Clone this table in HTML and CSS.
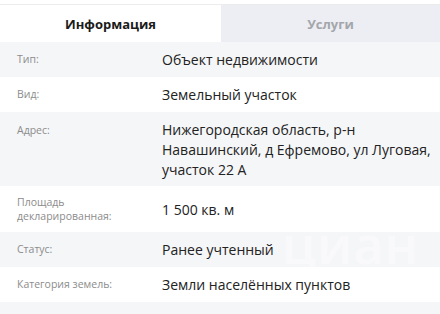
FILE: index.html
```html
<!DOCTYPE html>
<html lang="ru">
<head>
<meta charset="utf-8">
<title>Информация</title>
<link rel="stylesheet" href="styles.css">
</head>
<body>
<div class="card">
  <div class="tabs">
    <div class="tab tab-active">Информация</div>
    <div class="tab tab-inactive">Услуги</div>
  </div>
  <div class="rows">
    <div class="row row-grey"><div class="label">Тип:</div><div class="value">Объект недвижимости</div></div>
    <div class="row"><div class="label">Вид:</div><div class="value">Земельный участок</div></div>
    <div class="row row-grey row-top"><div class="label">Адрес:</div><div class="value">Нижегородская область, р-н Навашинский, д Ефремово, ул Луговая, участок 22 А</div></div>
    <div class="row row-tall"><div class="label label-multi">Площадь декларированная:</div><div class="value">1 500 кв. м</div></div>
    <div class="row row-grey"><div class="label">Статус:</div><div class="value">Ранее учтенный</div></div>
    <div class="row"><div class="label">Категория земель:</div><div class="value">Земли населённых пунктов</div></div>
    <div class="row row-grey"></div>
    <div class="watermark" aria-hidden="true">циан</div>
  </div>
</div>
</body>
</html>
```

FILE: styles.css
```css
* { box-sizing: border-box; }
html, body { margin: 0; padding: 0; background: #fff; }
body { font-family: "Open Sans", "Noto Sans", sans-serif; width: 440px; height: 314px; overflow: hidden; }
.card { padding-top: 4px; }
.tabs { display: grid; grid-template-columns: 221px 1fr; border-top: 1px solid #ececec; height: 38px; }
.tab { display: flex; align-items: center; justify-content: center; font-weight: 700; font-size: 13px; }
.tab-active { background: #fff; color: #1b1b1b; }
.tab-inactive { background: #eceef3; color: #a3a6ab; }
.rows { position: relative; }
.row { display: grid; grid-template-columns: 145px 1fr; align-items: center; padding: 7px 2px 7px 17px; min-height: 35px; background: #fff; }
.row-grey { background: #f5f6f8; }
.row-top { align-items: start; padding-top: 8px; padding-bottom: 6px; }
.row-top .value { line-height: 20px; }
.row-top .label { line-height: 20px; }
.row-tall { padding-top: 9px; padding-bottom: 9px; }
.label { font-size: 10.5px; color: #8c8c8c; line-height: 21px; max-width: 112px; }
.label-multi { line-height: 14px; }
.value { font-size: 14px; color: #222; line-height: 21px; }
.watermark { position: absolute; left: 282px; top: 176px; font-size: 52px; font-weight: 600; line-height: 1; color: rgba(255,255,255,0.4); pointer-events: none; letter-spacing: 1px; }
```
